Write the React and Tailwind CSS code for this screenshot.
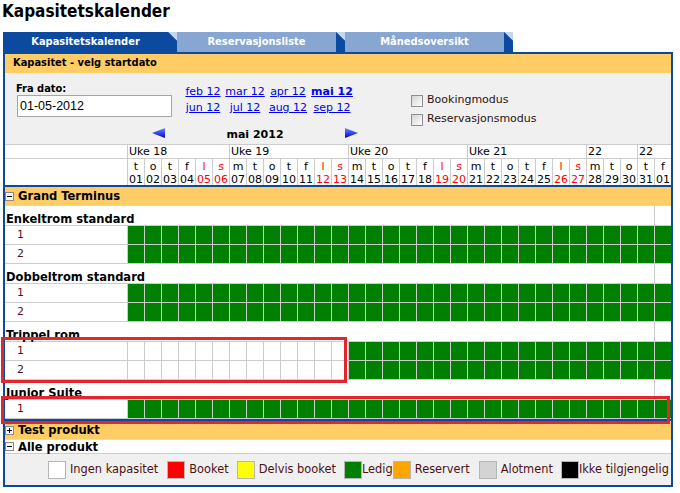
import React from "react";

const COND = "font-['DejaVu_Sans_Condensed','DejaVu_Sans',sans-serif] font-bold";
const BLUE = "bg-[#0b4a9e]";

const weeks = [
  ["Uke 18", 6],
  ["Uke 19", 7],
  ["Uke 20", 7],
  ["Uke 21", 7],
  ["22", 3],
  ["22", 2],
];

const letters = ["m", "t", "o", "t", "f", "l", "s"];
const days = Array.from({ length: 32 }, (_, d) => {
  const idx = (1 + d) % 7;
  return {
    letter: letters[idx],
    num: d < 31 ? String(d + 1).padStart(2, "0") : "01",
    red: idx === 5 || idx === 6,
  };
});

const products = [
  { name: "Enkeltrom standard", rows: [["1", 0], ["2", 0]] },
  { name: "Dobbeltrom standard", rows: [["1", 0], ["2", 0]] },
  { name: "Trippel rom", rows: [["1", 13], ["2", 13]] },
  { name: "Junior Suite", rows: [["1", 0]] },
];

const legend = [
  { c: "bg-white", t: "Ingen kapasitet", ml: "ml-0", tl: "ml-[4px]" },
  { c: "bg-[#ff0000]", t: "Booket", ml: "ml-[9px]", tl: "ml-[4px]" },
  { c: "bg-[#ffff00]", t: "Delvis booket", ml: "ml-[8px]", tl: "ml-[4px]" },
  { c: "bg-[#008000]", t: "Ledig", ml: "ml-[8px]", tl: "ml-0" },
  { c: "bg-[#ffa500]", t: "Reservert", ml: "ml-0", tl: "ml-[4px]" },
  { c: "bg-[#d3d3d3]", t: "Alotment", ml: "ml-[9px]", tl: "ml-[4px]" },
  { c: "bg-black", t: "Ikke tilgjengelig", ml: "ml-[8px]", tl: "ml-0" },
];

function Tab({ label, active }) {
  return (
    <div className="flex h-[20px]">
      <div
        className={`${
          active ? "w-[165px] bg-[#0b4a9e]" : "w-[159px] bg-[#87a6d2]"
        } flex items-center justify-center text-white text-[11px] ${COND}`}
      >
        {label}
      </div>
      <div className={`w-[9px] ${BLUE}`}>
        <svg width="9" height="9" viewBox="0 0 9 9" className="block">
          <polygon points="0,0 9,0 9,9" fill="#c8d6eb" />
          <polygon points="0,0 9,9 0,9" fill="#0b4a9e" />
        </svg>
      </div>
    </div>
  );
}

function Toggle({ plus }) {
  return (
    <span className="relative w-[9px] h-[9px] border border-[#8a8a8a] bg-[#f6f6f6] mr-[4px] shrink-0">
      <span className="absolute left-[1px] top-[3px] w-[5px] h-[1px] bg-black" />
      {plus && <span className="absolute left-[3px] top-[1px] w-[1px] h-[5px] bg-black" />}
    </span>
  );
}

function Check({ label }) {
  return (
    <div className="flex items-center h-[19px]">
      <span className="w-[12px] h-[12px] border border-[#8f8f8f] bg-linear-to-br from-[#d4d4d4] to-white" />
      <span className="ml-[4px] text-[11px] text-[#2a1414]">{label}</span>
    </div>
  );
}

function Arrow({ dir }) {
  const pts = dir === "left" ? "0,5 13,0 13,10" : "0,0 13,5 0,10";
  return (
    <svg width="13" height="10" viewBox="0 0 13 10" className="block">
      <defs>
        <linearGradient id={`g${dir}`} x1="0" y1="0" x2="0" y2="1">
          <stop offset="0" stopColor="#6f8cff" />
          <stop offset="1" stopColor="#0000d0" />
        </linearGradient>
      </defs>
      <polygon points={pts} fill={`url(#g${dir})`} />
    </svg>
  );
}

function DataRow({ label, white }) {
  return (
    <div className="flex h-[19px] border-b border-[#cccccc]">
      <div className="w-[122px] pl-[12px] flex items-center text-[11px] text-[#5e1010]">{label}</div>
      {days.map((_, i) => (
        <div
          key={i}
          className={`w-[17px] border-l border-[#cccccc] ${i < white ? "bg-white" : "bg-[#008000]"}`}
        />
      ))}
    </div>
  );
}

function Heading({ name }) {
  return (
    <div className="flex h-[20px] border-b border-[#cccccc]">
      <div className={`flex-1 pl-[1px] flex items-end text-[12.8px] leading-[13px] ${COND}`}>{name}</div>
      <div className="w-[17px] border-l border-[#cccccc]" />
    </div>
  );
}

const months1 = ["feb 12", "mar 12", "apr 12", "mai 12"];
const months2 = ["jun 12", "jul 12", "aug 12", "sep 12"];

export default function App() {
  return (
    <div className="relative w-[680px] h-[493px] overflow-hidden bg-white text-black font-['DejaVu_Sans',sans-serif]">
      <div className={`h-[32px] pl-[2px] text-[17px] leading-[22px] ${COND}`}>Kapasitetskalender</div>

      <div className="flex ml-[3px]">
        <Tab label="Kapasitetskalender" active />
        <Tab label="Reservasjonsliste" />
        <Tab label="Månedsoversikt" />
      </div>

      <div className="ml-[3px] w-[670px] border-2 border-[#0b4a9e]">
        <div className={`h-[19px] bg-[#ffcc66] pl-[8px] flex items-center text-[11px] ${COND}`}>
          Kapasitet - velg startdato
        </div>

        <div className="bg-[#f0f0f0] h-[71px]">
          <div className="flex items-start h-[54px] pt-[9px]">
            <div className="ml-[11px] w-[156px]">
              <div className={`h-[13px] text-[11px] leading-[13px] ${COND}`}>Fra dato:</div>
              <div className="ml-[1px] w-[155px] h-[22px] border border-[#a5a5a5] bg-white pl-[2px] flex items-center text-[12.5px] font-['Liberation_Sans',sans-serif]">
                01-05-2012
              </div>
            </div>
            <div className="ml-[12px] mt-[2px] grid grid-cols-[38px_46px_40px_48px] text-[11px] leading-[16px] text-[#0000ee]">
              {months1.map((m) => (
                <a key={m} className={`text-center underline ${m === "mai 12" ? "font-bold" : ""}`}>
                  {m}
                </a>
              ))}
              {months2.map((m) => (
                <a key={m} className="text-center underline">
                  {m}
                </a>
              ))}
            </div>
            <div className="ml-[55px] mt-[9px]">
              <Check label="Bookingmodus" />
              <Check label="Reservasjonsmodus" />
            </div>
          </div>
          <div className="flex items-start h-[17px] pt-[1px] pl-[147px]">
            <Arrow dir="left" />
            <div className="w-[180px] text-center text-[11px] leading-[13px] font-bold">mai 2012</div>
            <Arrow dir="right" />
          </div>
        </div>

        <div className="flex h-[14px] border-t border-[#cccccc] bg-white">
          <div className="w-[122px]" />
          {weeks.map(([w, n], i) => (
            <div
              key={i}
              style={{ width: n * 17 }}
              className="border-l border-[#cccccc] pl-[1px] text-[11px] leading-[13px]"
            >
              {w}
            </div>
          ))}
        </div>
        <div className="flex h-[27px] border-t border-[#cccccc] bg-white">
          <div className="w-[122px]" />
          {days.map((d, i) => (
            <div
              key={i}
              className={`w-[17px] border-l border-[#cccccc] pt-[1px] text-center text-[11px] leading-[13px] ${
                d.red ? "text-[#ff0000]" : "text-black"
              }`}
            >
              <div>{d.letter}</div>
              <div>{d.num}</div>
            </div>
          ))}
        </div>
        <div className={`h-[2px] ${BLUE}`} />

        <div className={`h-[19px] bg-[#ffcc66] border-b border-[#e6d6b0] flex items-center text-[12.8px] ${COND}`}>
          <Toggle />
          Grand Terminus
        </div>

        {products.map((p) => (
          <div key={p.name}>
            <Heading name={p.name} />
            {p.rows.map(([l, w]) => (
              <DataRow key={l} label={l} white={w} />
            ))}
          </div>
        ))}

        <div className={`h-[2px] ${BLUE}`} />
        <div className={`h-[19px] bg-[#ffcc66] border-b border-[#dddddd] flex items-center text-[12.8px] ${COND}`}>
          <Toggle plus />
          Test produkt
        </div>
        <div className={`h-[14px] bg-white border-b border-[#cccccc] flex items-center text-[12.8px] leading-[13px] ${COND}`}>
          <Toggle />
          Alle produkt
        </div>

        <div className="h-[31px] bg-[#f0f0f0] flex items-center pl-[43px] text-[11.4px] text-[#4d1010]">
          {legend.map((l) => (
            <div key={l.t} className={`flex items-center ${l.ml}`}>
              <span className={`w-[18px] h-[18px] border border-[#b5b5b5] ${l.c}`} />
              <span className={l.tl}>{l.t}</span>
            </div>
          ))}
        </div>
      </div>

      <div className="absolute left-[1px] top-[337px] w-[346px] h-[46px] border-[3px] border-[#e3262e]" />
      <div className="absolute left-[1px] top-[396px] w-[669px] h-[28px] border-[3px] border-[#e3262e]" />
    </div>
  );
}
